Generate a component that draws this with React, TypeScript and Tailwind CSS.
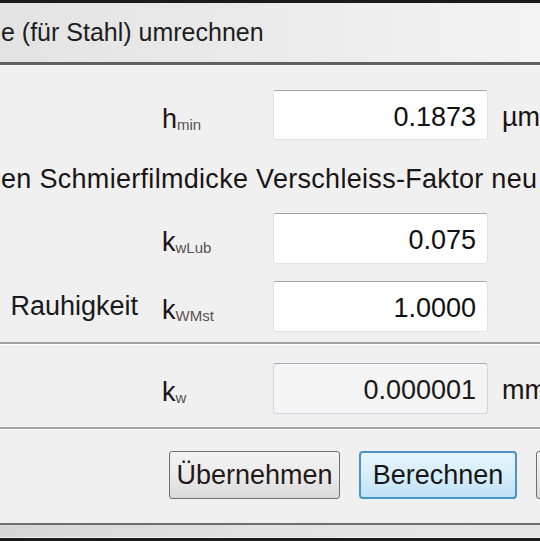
import type { ReactNode } from "react";

const font = { fontFamily: "'Liberation Sans', Arial, sans-serif" };

function Symbol({ base, sub }: { base: string; sub: string }) {
  return (
    <span className="pt-[8px] text-[27px] text-[#1c1414] whitespace-nowrap">
      {base}
      <span className="text-[15px] text-[#5a5050] align-[-2px]">{sub}</span>
    </span>
  );
}

function Field({
  value,
  readOnly = false,
}: {
  value: string;
  readOnly?: boolean;
}) {
  return (
    <div
      className={
        readOnly
          ? "w-[215px] h-full shrink-0 flex items-center justify-end pr-[11px] pt-[4px] rounded-[3px] border border-[#d2d5da] border-t-[#a8abb0] bg-[#f4f4f4] text-[27px] text-[#1a1a1a]"
          : "w-[215px] h-full shrink-0 flex items-center justify-end pr-[11px] pt-[4px] rounded-[3px] border border-[#dfe3e8] border-t-[#a3a6ab] bg-white text-[27px] text-[#111111]"
      }
    >
      {value}
    </div>
  );
}

function Row({
  h,
  label,
  symbol,
  field,
  unit,
}: {
  h: string;
  label?: string;
  symbol: ReactNode;
  field: ReactNode;
  unit?: string;
}) {
  return (
    <div className={`flex items-center shrink-0 ${h}`}>
      <div className="w-[150px] shrink-0 flex justify-end pr-[12px] text-[27px] text-[#1a1a1a] whitespace-nowrap">
        {label}
      </div>
      <div className="w-[123px] shrink-0 flex items-center pl-[12px]">{symbol}</div>
      {field}
      {unit && (
        <span className="ml-[14px] pt-[4px] text-[27px] text-[#1a1414] whitespace-nowrap">
          {unit}
        </span>
      )}
    </div>
  );
}

function Separator() {
  return (
    <div className="shrink-0">
      <div className="h-[2px] bg-[#a2a2a2]" />
      <div className="h-[1px] bg-white" />
    </div>
  );
}

export default function App() {
  return (
    <div
      className="w-[540px] h-[541px] overflow-hidden flex flex-col bg-[#f0f0f0]"
      style={font}
    >
      {/* window frame + caption */}
      <div className="h-[3px] shrink-0 bg-[#1b1b1b]" />
      <div className="h-[59px] shrink-0 flex items-center pl-[1px] bg-linear-to-r from-[#e3e3e3] via-[#ebebeb] to-[#f3f3f3] text-[25px] text-[#1e1e1e] whitespace-nowrap">
        e (für Stahl) umrechnen
      </div>
      <div className="h-[3px] shrink-0 bg-[#5f5f5f]" />
      <div className="h-[1px] shrink-0 bg-[#fafafa]" />

      {/* input section */}
      <div className="flex flex-col pt-[24px] pb-[10px] shrink-0">
        <Row
          h="h-[50px]"
          symbol={<Symbol base="h" sub="min" />}
          field={<Field value="0.1873" />}
          unit="µm"
        />
        <div className="h-[73px] shrink-0 flex items-center pt-[6px] pl-[1px] text-[27px] tracking-[0.3px] text-[#1a1414] whitespace-nowrap">
          en Schmierfilmdicke Verschleiss-Faktor neu
        </div>
        <Row
          h="h-[51px]"
          symbol={<Symbol base="k" sub="wLub" />}
          field={<Field value="0.075" />}
        />
        <div className="h-[17px] shrink-0" />
        <Row
          h="h-[51px]"
          label="Rauhigkeit"
          symbol={<Symbol base="k" sub="WMst" />}
          field={<Field value="1.0000" />}
        />
      </div>

      <Separator />

      {/* result */}
      <div className="flex flex-col pt-[18px] pb-[13px] shrink-0">
        <Row
          h="h-[51px]"
          symbol={<Symbol base="k" sub="w" />}
          field={<Field value="0.000001" readOnly />}
          unit="mm"
        />
      </div>

      <Separator />

      {/* buttons */}
      <div className="h-[93px] shrink-0 flex items-start pt-[21px] pl-[169px] gap-[19px]">
        <button
          type="button"
          className="w-[171px] h-[48px] shrink-0 rounded-[3px] border border-[#707070] bg-linear-to-b from-[#f3f3f3] via-[#ebebeb] to-[#d9d9d9] text-[27px] text-[#241818]"
        >
          Übernehmen
        </button>
        <button
          type="button"
          className="w-[158px] h-[48px] shrink-0 rounded-[4px] border-2 border-[#4c93c8] bg-linear-to-b from-[#e8f5fc] via-[#d6eefa] to-[#bfe2f5] text-[27px] text-[#161616]"
        >
          Berechnen
        </button>
        <div className="w-[158px] h-[48px] shrink-0 rounded-[3px] border border-[#707070] bg-linear-to-b from-[#f3f3f3] to-[#dcdcdc]" />
      </div>

      {/* bottom frame */}
      <div className="h-[2px] shrink-0 bg-[#6e6e6e]" />
      <div className="h-[12px] shrink-0 bg-linear-to-r from-[#d6d6d6] via-[#e2e2e2] to-[#e6e6e6]" />
      <div className="h-[1px] shrink-0 bg-[#f2f2f2]" />
      <div className="h-[3px] shrink-0 bg-[#1b1b1b]" />
    </div>
  );
}
